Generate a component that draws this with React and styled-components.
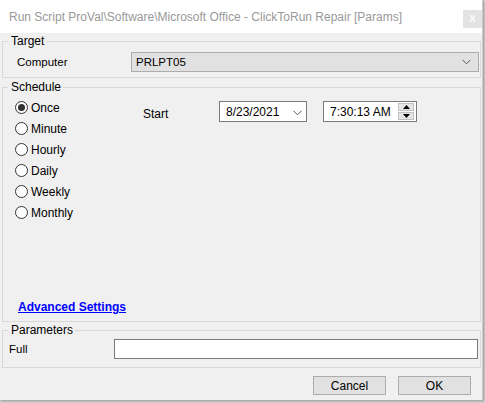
import React from "react";
import styled, { createGlobalStyle } from "styled-components";

const GlobalStyle = createGlobalStyle`
  html, body {
    margin: 0;
    padding: 0;
    background: #cfcfcf;
    width: 485px;
    height: 403px;
    overflow: hidden;
  }
  * { box-sizing: border-box; }
`;

const Dialog = styled.div`
  width: 483px;
  height: 400px;
  background: #f0f0f0;
  display: flex;
  flex-direction: column;
  font-family: "Liberation Sans", Arial, sans-serif;
  font-size: 11.5px;
  color: #000;
  box-shadow: 1px 1px 2px rgba(0, 0, 0, 0.25);
  border-right: 1px solid #c9c9c9;
`;

const TitleBar = styled.div`
  height: 33px;
  background: #fff;
  display: flex;
  align-items: flex-start;
  justify-content: space-between;
  padding-left: 9px;
  flex-shrink: 0;
`;

const Title = styled.div`
  font-size: 12px;
  color: #999;
  line-height: 34px;
  white-space: nowrap;
`;

const CloseBtn = styled.div`
  width: 19px;
  height: 18px;
  margin-top: 10px;
  background: #e3e3e3;
  color: #fafafa;
  font-size: 12px;
  font-weight: bold;
  line-height: 17px;
  text-align: center;
`;

const Group = styled.fieldset`
  margin: 0 1px 0 2px;
  padding: ${(p) => p.$pad || "2px 0 5px 0"};
  border: 1px solid #d9d9d9;
  min-width: 0;
  display: flex;
  flex-direction: column;
  flex: ${(p) => (p.$grow ? "1" : "none")};
`;

const Legend = styled.legend`
  margin-left: 5px;
  padding: 0 2px 0 3px;
  line-height: 16px;
  font-size: 12px;
`;

const FieldRow = styled.div`
  display: flex;
  align-items: center;
  height: ${(p) => p.$h || 20}px;
`;

const FieldLabel = styled.div`
  width: ${(p) => p.$w}px;
  padding-left: ${(p) => p.$left}px;
  flex-shrink: 0;
`;

const Select = styled.div`
  width: 348px;
  height: 20px;
  background: #e1e1e1;
  border: 1px solid #adadad;
  display: flex;
  align-items: center;
  justify-content: space-between;
  padding: 0 7px 0 4px;
`;

const ScheduleBody = styled.div`
  display: flex;
  padding-left: 12px;
`;

const RadioList = styled.div`
  width: 128px;
  display: flex;
  flex-direction: column;
`;

const RadioRow = styled.div`
  height: 21px;
  display: flex;
  align-items: center;
  gap: 3px;
  font-size: 12px;
`;

const RadioCircle = styled.span`
  width: 13px;
  height: 13px;
  border-radius: 50%;
  border: 1px solid #333;
  background: #fff;
  display: flex;
  align-items: center;
  justify-content: center;
  &::after {
    content: "";
    width: 7px;
    height: 7px;
    border-radius: 50%;
    background: ${(p) => (p.$on ? "#333" : "transparent")};
  }
`;

const StartArea = styled.div`
  display: flex;
  align-items: center;
  height: 21px;
  margin-top: 4px;
`;

const StartLabel = styled.div`
  width: 76px;
  padding-top: 5px;
  font-size: 12px;
`;

const PickerBox = styled.div`
  height: 21px;
  width: ${(p) => p.$w}px;
  margin-right: ${(p) => p.$mr || 0}px;
  background: #fff;
  border: 1px solid #7a7a7a;
  display: flex;
  align-items: center;
  justify-content: space-between;
  padding: 0 2px 0 6px;
  font-size: 12px;
`;

const Spinner = styled.div`
  display: flex;
  flex-direction: column;
  gap: 1px;
`;

const SpinBtn = styled.div`
  width: 16px;
  height: 8px;
  background: #e5e5e5;
  border: 1px solid #c2c2c2;
  display: flex;
  align-items: center;
  justify-content: center;
`;

const AdvLink = styled.a`
  margin-top: auto;
  margin-left: 15px;
  margin-bottom: 6px;
  color: #0000ff;
  font-weight: bold;
  text-decoration: underline;
  font-size: 12px;
  line-height: 16px;
  cursor: pointer;
`;

const TextInput = styled.div`
  width: 364px;
  height: 20px;
  background: #fff;
  border: 1px solid #7a7a7a;
`;

const Footer = styled.div`
  height: 32px;
  display: flex;
  justify-content: flex-end;
  align-items: flex-start;
  gap: 12px;
  padding: 8px 11px 0 0;
`;

const Button = styled.div`
  width: 73px;
  height: 19px;
  background: #e1e1e1;
  border: 1px solid #adadad;
  display: flex;
  align-items: center;
  justify-content: center;
  font-size: 12px;
`;

const Chevron = () => (
  <svg width={9} height={6} viewBox="0 0 9 6">
    <path d="M0.5 0.8 L4.5 4.8 L8.5 0.8" fill="none" stroke="#555" strokeWidth="1" />
  </svg>
);

const Tri = ({ up }) => (
  <svg width="7" height="4" viewBox="0 0 7 4">
    <path d={up ? "M0 4 L3.5 0 L7 4 Z" : "M0 0 L3.5 4 L7 0 Z"} fill="#000" />
  </svg>
);

const options = ["Once", "Minute", "Hourly", "Daily", "Weekly", "Monthly"];

export default function App() {
  return (
    <>
      <GlobalStyle />
      <Dialog>
        <TitleBar>
          <Title>Run Script ProVal\Software\Microsoft Office - ClickToRun Repair [Params]</Title>
          <CloseBtn>x</CloseBtn>
        </TitleBar>

        <Group $pad="3px 0 5px 0">
          <Legend>Target</Legend>
          <FieldRow>
            <FieldLabel $w={128} $left={14}>Computer</FieldLabel>
            <Select>
              <span>PRLPT05</span>
              <Chevron />
            </Select>
          </FieldRow>
        </Group>

        <Group $grow $pad="2px 0 0 0" style={{ marginTop: 1 }}>
          <Legend>Schedule</Legend>
          <ScheduleBody>
            <RadioList>
              {options.map((o, i) => (
                <RadioRow key={o}>
                  <RadioCircle $on={i === 0} />
                  <span>{o}</span>
                </RadioRow>
              ))}
            </RadioList>
            <StartArea>
              <StartLabel>Start</StartLabel>
              <PickerBox $w={88} $mr={16}>
                <span>8/23/2021</span>
                <span style={{ marginRight: 2 }}>
                  <Chevron />
                </span>
              </PickerBox>
              <PickerBox $w={94}>
                <span>7:30:13 AM</span>
                <Spinner>
                  <SpinBtn><Tri up /></SpinBtn>
                  <SpinBtn><Tri /></SpinBtn>
                </Spinner>
              </PickerBox>
            </StartArea>
          </ScheduleBody>
          <AdvLink>Advanced Settings</AdvLink>
        </Group>

        <Group $pad="1px 0 8px 0">
          <Legend>Parameters</Legend>
          <FieldRow>
            <FieldLabel $w={111} $left={6}>Full</FieldLabel>
            <TextInput />
          </FieldRow>
        </Group>

        <Footer>
          <Button>Cancel</Button>
          <Button>OK</Button>
        </Footer>
      </Dialog>
    </>
  );
}
